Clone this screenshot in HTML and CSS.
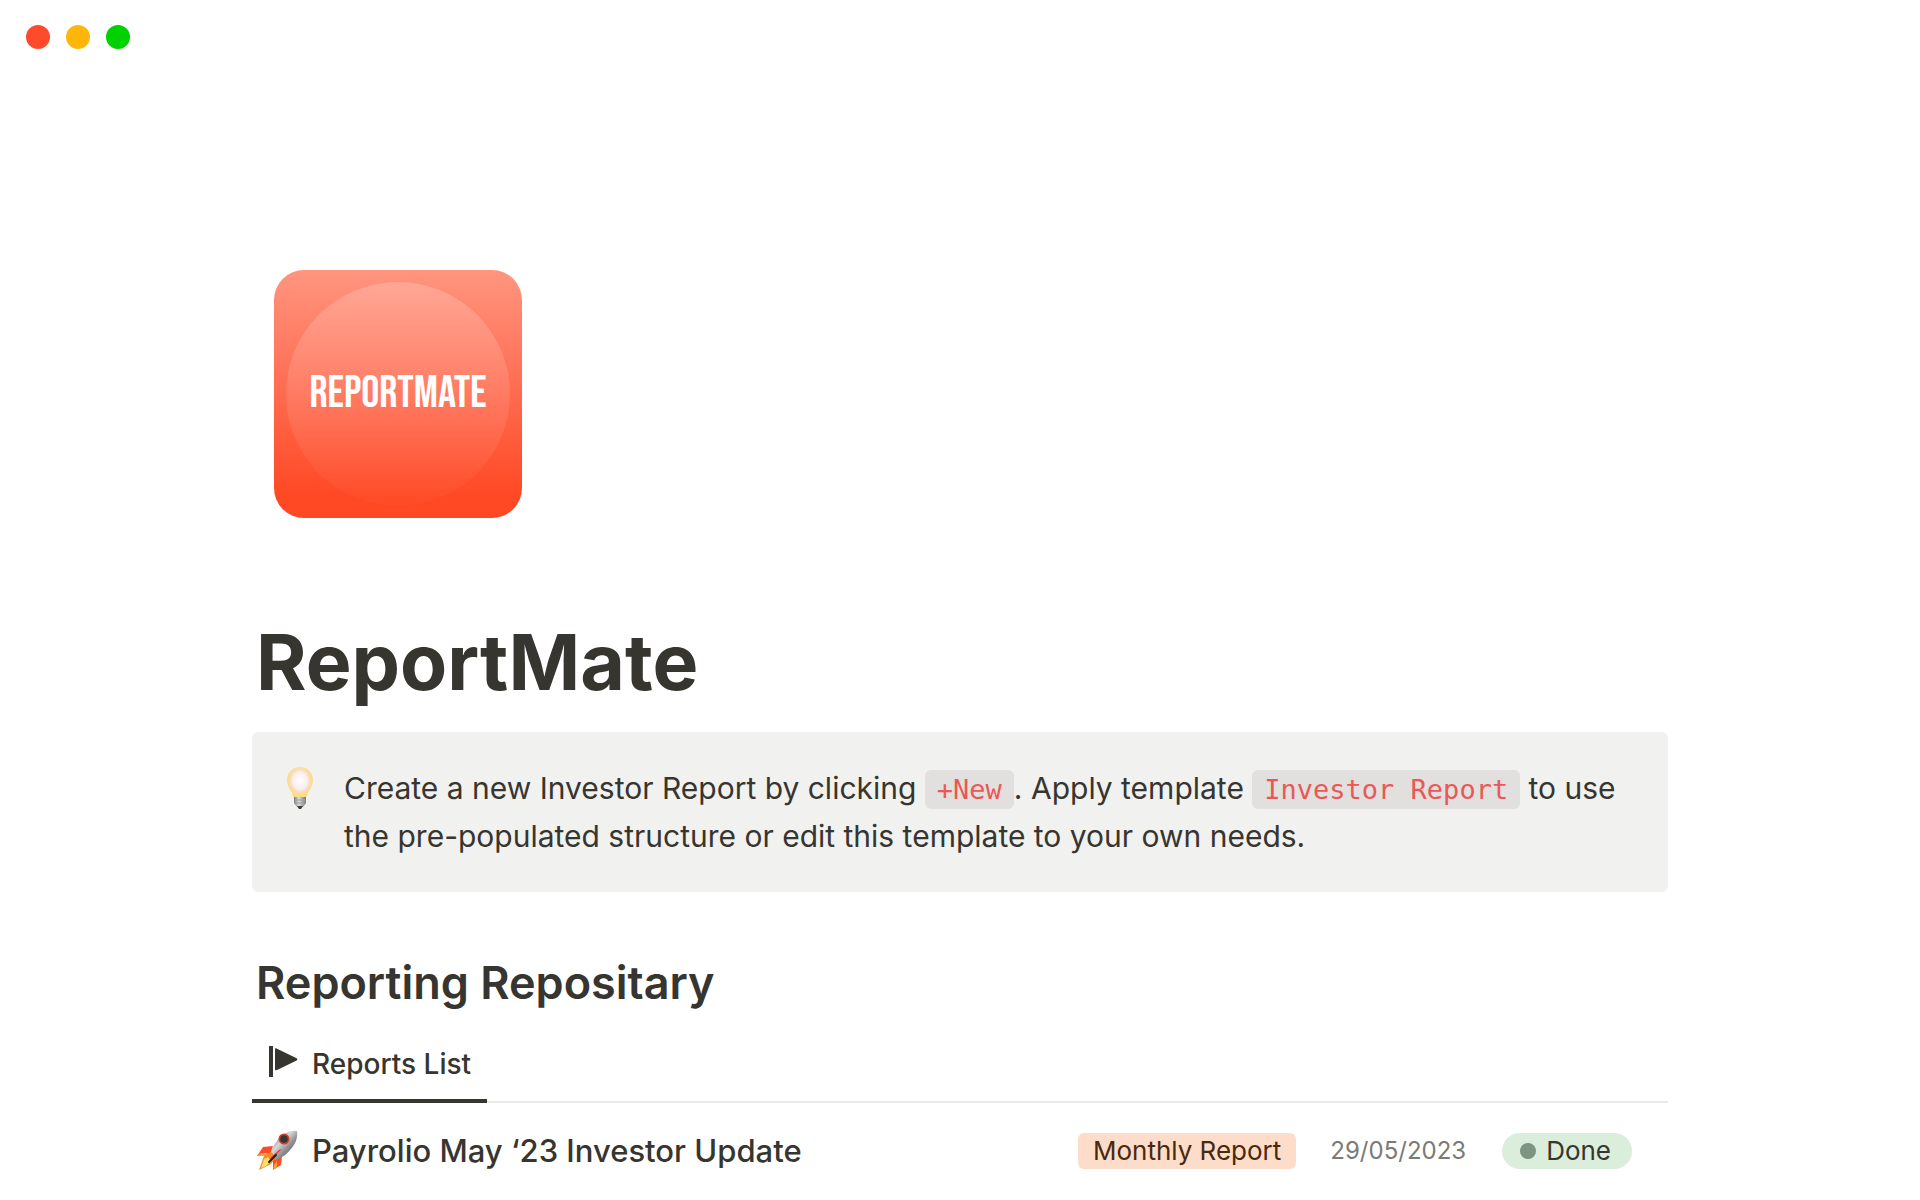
FILE: index.html
```html
<!DOCTYPE html>
<html lang="en">
<head>
<meta charset="utf-8">
<meta name="viewport" content="width=device-width, initial-scale=1">
<title>ReportMate</title>
<link rel="stylesheet" href="styles.css">
</head>
<body>
<header class="window-bar">
  <span class="dot dot-close"></span>
  <span class="dot dot-minimize"></span>
  <span class="dot dot-zoom"></span>
</header>
<main class="page">
  <div class="logo"><span class="logo-disc">REPORTMATE</span></div>
  <h1 class="title">ReportMate</h1>

  <aside class="callout">
    <svg class="bulb" viewBox="0 0 28 44" aria-hidden="true">
      <defs>
        <radialGradient id="glow" cx="50%" cy="44%" r="56%">
          <stop offset="0" stop-color="#ffffff"/>
          <stop offset=".5" stop-color="#f8efed"/>
          <stop offset=".64" stop-color="#fbdcc4"/>
          <stop offset=".8" stop-color="#fbdd90"/>
          <stop offset="1" stop-color="#f9dc80"/>
        </radialGradient>
        <linearGradient id="cap" x1="0" x2="1" y1="0" y2="0">
          <stop offset="0" stop-color="#77777a"/>
          <stop offset=".4" stop-color="#dededf"/>
          <stop offset="1" stop-color="#747477"/>
        </linearGradient>
      </defs>
      <path fill="url(#glow)" d="M14 1C6 1 1 7 1 14c0 6 3 9 5 13 1 2 1 4 2 5h12c1-1 1-3 2-5 2-4 5-7 5-13C27 7 22 1 14 1z"/>
      <path fill="url(#cap)" d="M8 31h12v6l-3 4h-6l-3-4z"/>
      <path stroke="#a0a0a3" d="M8 34h12M8 37h12"/>
      <path fill="#3d3d40" d="M11 40h6l-2 3h-2z"/>
    </svg>
    <p class="callout-text">Create a new Investor Report by clicking <code class="code">+New</code>. Apply template <code class="code">Investor Report</code> to use the pre-populated structure or edit this template to your own needs.</p>
  </aside>

  <h2 class="heading">Reporting Repositary</h2>
  <nav class="tabs">
    <button class="tab" type="button">
      <svg class="flag" viewBox="0 0 32 36" aria-hidden="true">
        <path fill="#37352f" d="M1 0h4v31H1z"/>
        <path fill="#37352f" d="M7 3.400c0-.9.8-1.300 1.600-.9l20 9.700c1 .6 1 1.600 0 2.200L8.600 24.200c-.8.400-1.600 0-1.600-.9z"/>
      </svg>
      Reports List
    </button>
  </nav>

  <ul class="reports">
    <li class="report">
      <svg class="rocket" viewBox="0 0 42 42" aria-hidden="true">
        <defs>
          <linearGradient id="hull" x1="0" y1="0" x2="1" y2="1">
            <stop offset=".15" stop-color="#77787a"/>
            <stop offset=".4" stop-color="#d6d7d8"/>
            <stop offset=".6" stop-color="#919294"/>
            <stop offset="1" stop-color="#3c3d3f"/>
          </linearGradient>
        </defs>
        <path fill="#fb4b29" d="M17 16 7 17 1 26l13-1zM26 26l-1 9-8 5 0-12z"/>
        <path fill="#f8a136" d="M1 26l4-3 9 0-1 3zM17 40l1-5 3-4 0 6z"/>
        <path fill="url(#hull)" d="M41 1c-8-1-16 4-20 10-3 4-6 9-7 14l5 5c7-2 12-6 16-11 5-6 7-12 6-18z"/>
        <path fill="#f58a27" d="M8 26l7-4 5 5-5 7-12 6z"/>
        <path fill="#fbe16b" d="M8 29l4-2 3 4-5 5-5 2z"/>
        <path fill="#e8402a" d="m13 29 10-9 3-1-9 9z"/>
        <path fill="none" stroke="#202124" stroke-width="2" stroke-linecap="round" d="m13 32 7-7"/>
        <circle cx="28" cy="9" r="5.500" fill="#d63a27"/>
        <circle cx="28" cy="9" r="3.800" fill="#343538"/>
      </svg>
      <a class="report-name" href="#">Payrolio May ‘23 Investor Update</a>
      <span class="tag">Monthly Report</span>
      <time class="date" datetime="2023-05-29">29/05/2023</time>
      <span class="status">Done</span>
    </li>
  </ul>
</main>
</body>
</html>
```
FILE: styles.css
```css
* {
  box-sizing: border-box;
}

body {
  margin: 0;
  background: #fff;
  color: #37352f;
  font-family: Inter, "Liberation Sans", sans-serif;
}

.window-bar {
  display: flex;
  gap: 16px;
  padding: 25px 26px;
}

.dot {
  width: 24px;
  height: 24px;
  border-radius: 50%;
}

.dot-close { background: #ff4b2b; }
.dot-minimize { background: #ffb60a; }
.dot-zoom { background: #00d100; }

.page {
  max-width: 1416px;
  margin: 0 auto;
  padding-top: 196px;
}

.logo {
  display: flex;
  align-items: center;
  justify-content: center;
  width: 248px;
  height: 248px;
  margin-left: 22px;
  border-radius: 30px;
  background: linear-gradient(#ff957f, #ff7359 40%, #ff4824 92%);
}

.logo-disc {
  display: flex;
  align-items: center;
  justify-content: center;
  width: 224px;
  height: 224px;
  border-radius: 50%;
  background: linear-gradient(rgba(255, 255, 255, .2), rgba(255, 255, 255, .02));
  color: #fff;
  font: 400 45px/48px "Bebas Neue", "Roboto Condensed", "Liberation Sans Narrow", sans-serif;
}

.title {
  margin: 96px 4px 22px;
  font-size: 77px;
  line-height: 96px;
  font-weight: 700;
}

.callout {
  display: flex;
  gap: 28px;
  padding: 32px;
  border-radius: 6px;
  background: #f1f1ef;
}

.bulb {
  flex: none;
  width: 32px;
  height: 44px;
  margin-top: 2px;
}

.callout-text {
  margin: 0;
  font-size: 30px;
  line-height: 48px;
}

.code {
  padding: 4px 12px;
  border-radius: 6px;
  background: #e1e0de;
  color: #eb5757;
  font: 27px/32px "DejaVu Sans Mono", monospace;
}

.heading {
  margin: 59px 4px 12px;
  font-size: 45px;
  line-height: 64px;
  font-weight: 600;
}

.tabs {
  display: flex;
  border-bottom: 2px solid #e9e9e7;
}

.tab {
  display: flex;
  align-items: center;
  gap: 12px;
  margin-bottom: -2px;
  padding: 19px 16px 17px;
  border: 0;
  border-bottom: 4px solid #37352f;
  background: none;
  color: inherit;
  font: 500 28px/36px Inter, "Liberation Sans", sans-serif;
}

.flag {
  width: 32px;
  height: 36px;
}

.reports {
  margin: 0;
  padding: 24px 36px 24px 4px;
  list-style: none;
}

.report {
  display: flex;
  align-items: center;
}

.rocket {
  flex: none;
  width: 42px;
  height: 42px;
  margin-right: 14px;
}

.report-name {
  flex: 1;
  color: inherit;
  font-size: 31px;
  line-height: 48px;
  font-weight: 500;
  text-decoration: none;
}

.tag,
.date,
.status {
  font-size: 26px;
  line-height: 36px;
}

.tag {
  margin-right: 34px;
  padding: 0 15px;
  border-radius: 6px;
  background: #fdddc9;
  color: #49290e;
}

.date {
  margin-right: 36px;
  color: #7b7a77;
  font-size: 24px;
}

.status {
  display: flex;
  align-items: center;
  gap: 10px;
  padding: 0 21px 0 18px;
  border-radius: 18px;
  background: #dbeddb;
}

.status::before {
  content: "";
  width: 16px;
  height: 16px;
  border-radius: 50%;
  background: #7b9582;
}
```
